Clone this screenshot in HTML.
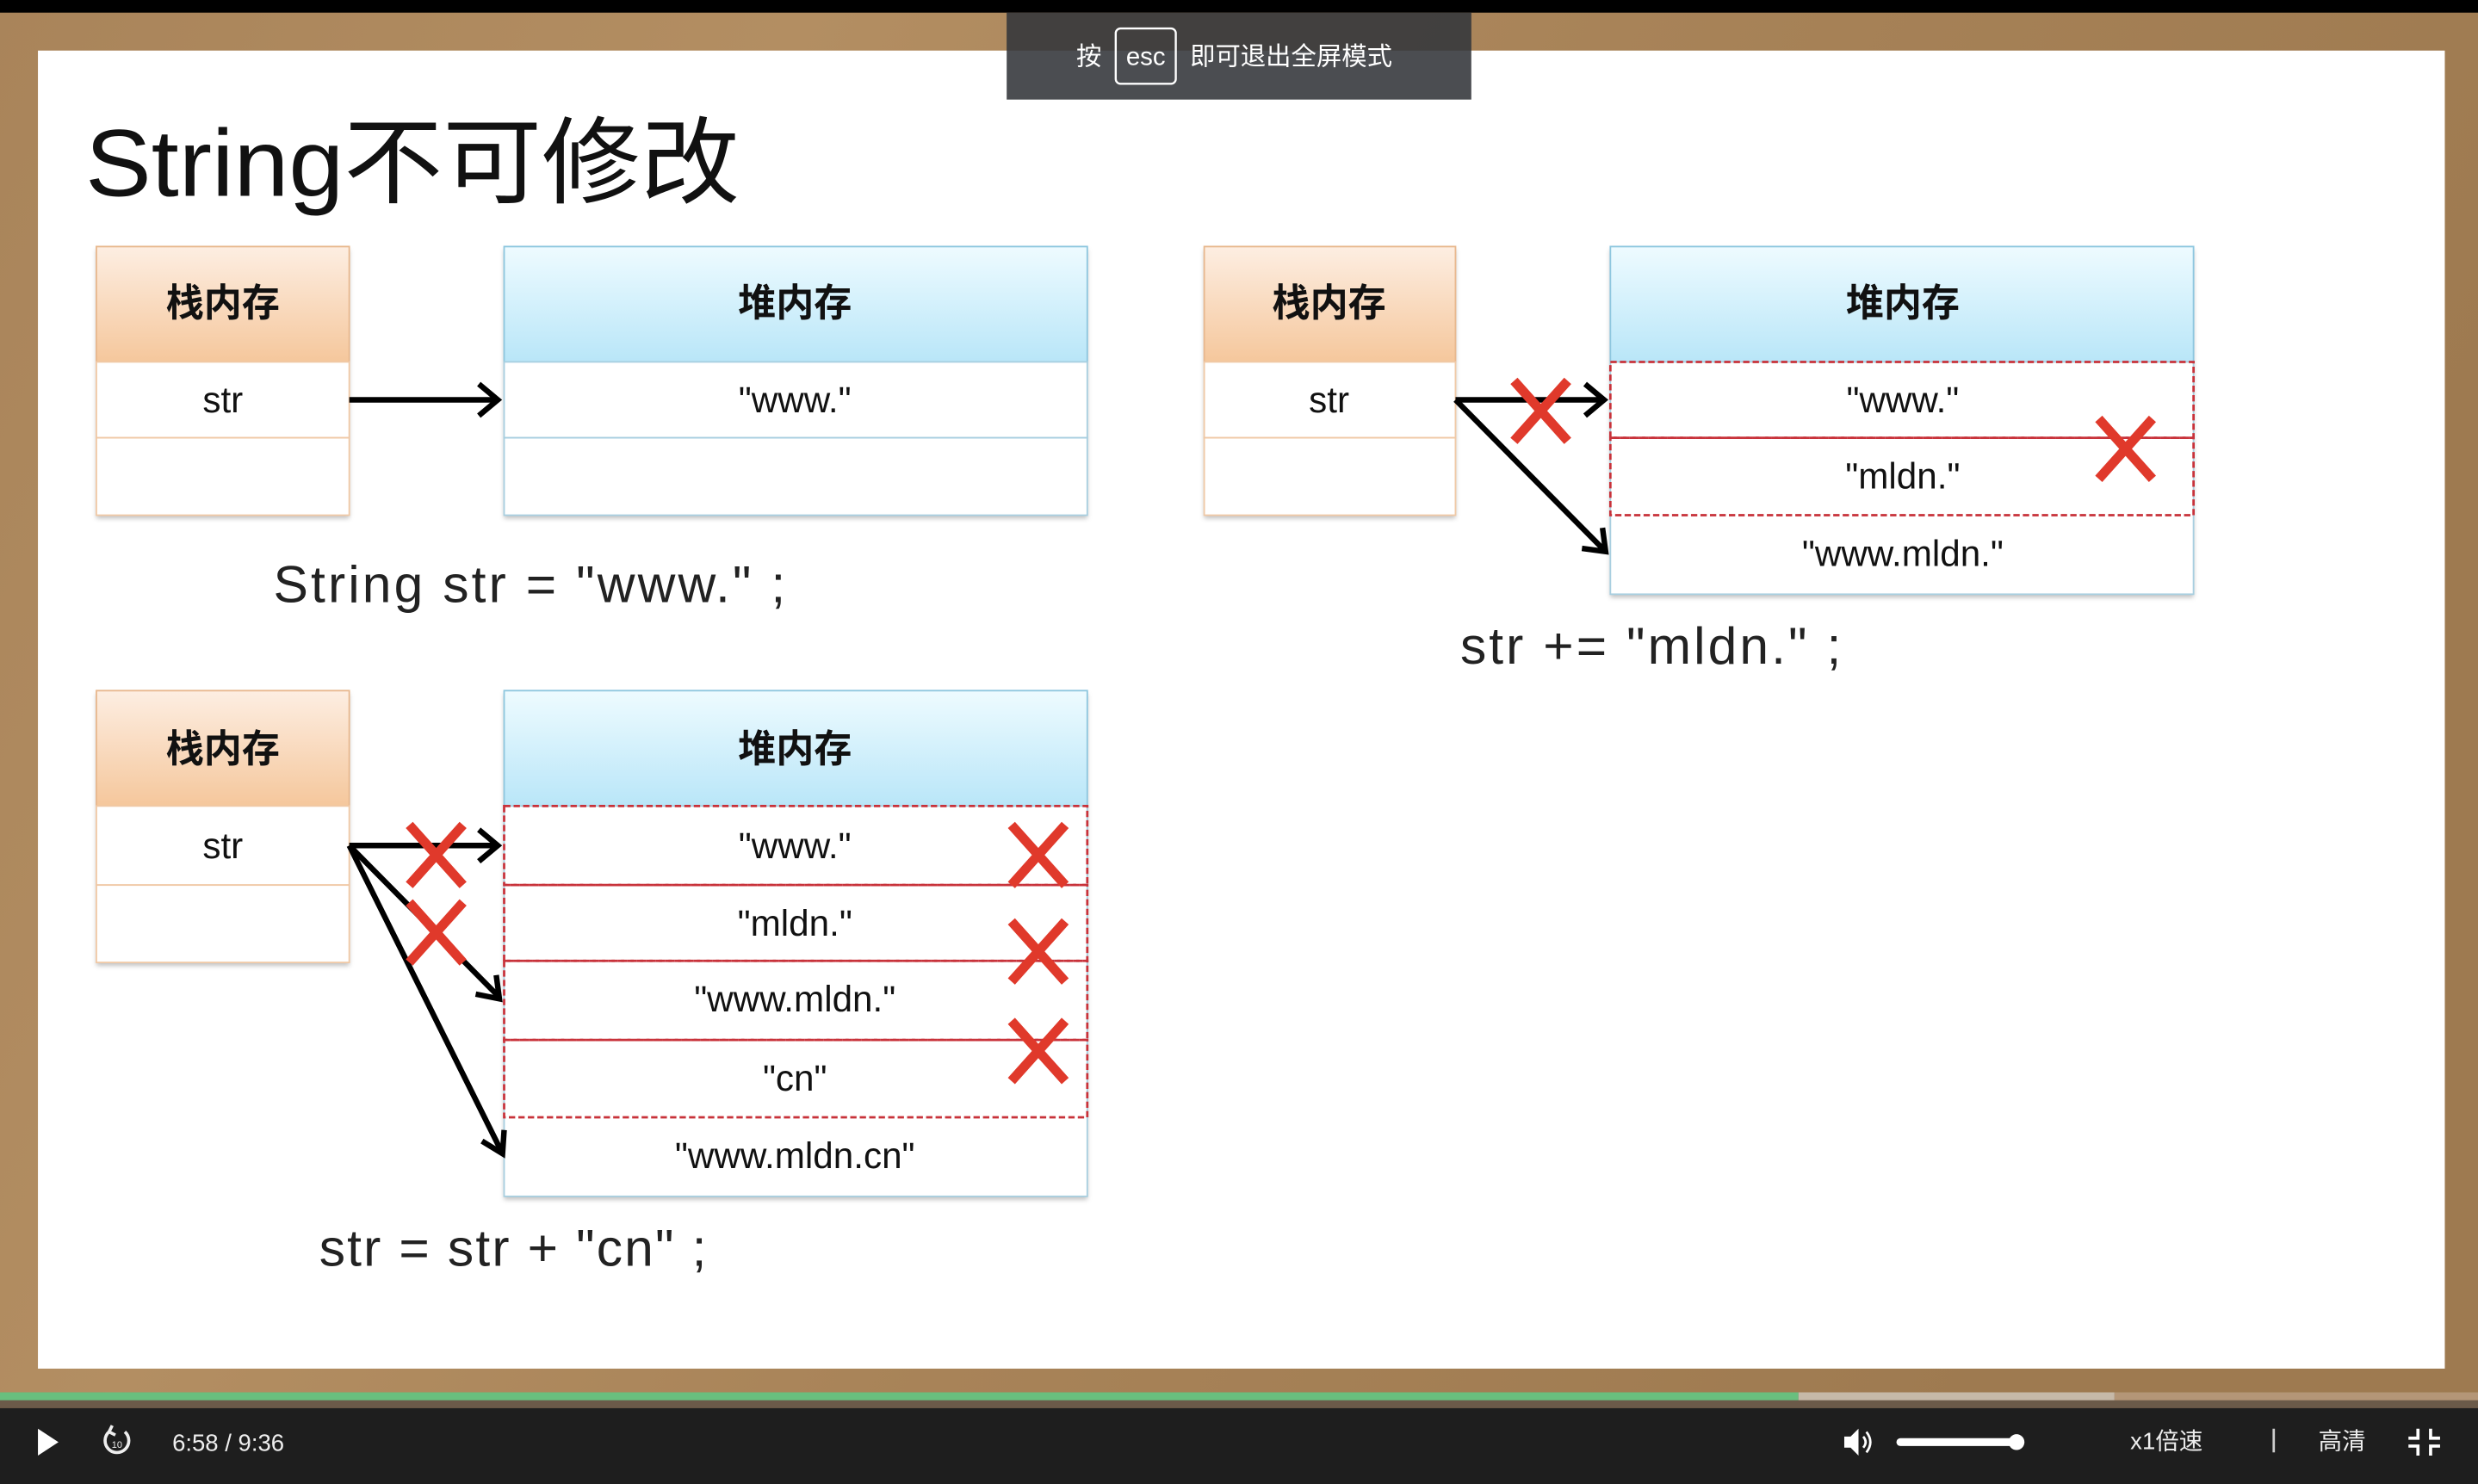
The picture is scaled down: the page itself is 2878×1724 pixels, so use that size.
<!DOCTYPE html>
<html><head><meta charset="utf-8"><style>
html,body{margin:0;padding:0;background:#1e1e1e;}
svg{display:block;}
text{font-family:"Liberation Sans","Noto Sans CJK SC",sans-serif;}
</style></head><body>
<svg width="2878" height="1724" viewBox="0 0 1568 939" preserveAspectRatio="none" xmlns="http://www.w3.org/2000/svg">
<defs>
<linearGradient id="wood" x1="0" y1="0" x2="1" y2="0.3">
<stop offset="0" stop-color="#a9845a"/><stop offset="0.3" stop-color="#b38e62"/><stop offset="0.6" stop-color="#a88358"/><stop offset="1" stop-color="#9e7a50"/></linearGradient>
<linearGradient id="org" x1="0" y1="0" x2="0" y2="1"><stop offset="0" stop-color="#fdeee2"/><stop offset="1" stop-color="#f5c79c"/></linearGradient>
<linearGradient id="blu" x1="0" y1="0" x2="0" y2="1"><stop offset="0" stop-color="#eefbff"/><stop offset="1" stop-color="#b9e6f8"/></linearGradient>
<filter id="sh" x="-5%" y="-5%" width="110%" height="115%"><feDropShadow dx="0" dy="2" stdDeviation="1.5" flood-color="#000" flood-opacity="0.25"/></filter>
<g id="x"><line x1="-17" y1="-19" x2="17" y2="19" stroke="#e0392b" stroke-width="6"/><line x1="17" y1="-19" x2="-17" y2="19" stroke="#e0392b" stroke-width="6"/></g>
</defs>
<rect width="1568" height="939" fill="url(#wood)"/>
<rect width="1568" height="8" fill="#000"/>
<rect x="24" y="32" width="1523" height="834" fill="#fff"/>

<text x="54" y="124" font-size="60" fill="#111" textLength="414" lengthAdjust="spacingAndGlyphs">String不可修改</text>

<g font-size="23" fill="#111" text-anchor="middle">
<g filter="url(#sh)">
<rect x="61" y="156" width="160" height="170" fill="#fff"/>
<rect x="319" y="156" width="369" height="170" fill="#fff"/>
<rect x="762" y="156" width="159" height="170" fill="#fff"/>
<rect x="1019" y="156" width="369" height="220" fill="#fff"/>
<rect x="61" y="437" width="160" height="172" fill="#fff"/>
<rect x="319" y="437" width="369" height="320" fill="#fff"/>
</g>
<!-- set1 -->
<rect x="61" y="156" width="160" height="73" fill="url(#org)" stroke="#e8b88e"/>
<rect x="61" y="229" width="160" height="48" fill="#fff" stroke="#f0c9a6"/>
<rect x="61" y="277" width="160" height="49" fill="#fff" stroke="#f0c9a6"/>
<text x="141" y="200" font-weight="bold" font-size="24">栈内存</text>
<text x="141" y="261">str</text>
<rect x="319" y="156" width="369" height="73" fill="url(#blu)" stroke="#8ec7df"/>
<rect x="319" y="229" width="369" height="48" fill="#fff" stroke="#a8cfe0"/>
<rect x="319" y="277" width="369" height="49" fill="#fff" stroke="#a8cfe0"/>
<text x="503" y="200" font-weight="bold" font-size="24">堆内存</text>
<text x="503" y="261">"www."</text>

<!-- set2 -->
<rect x="762" y="156" width="159" height="73" fill="url(#org)" stroke="#e8b88e"/>
<rect x="762" y="229" width="159" height="48" fill="#fff" stroke="#f0c9a6"/>
<rect x="762" y="277" width="159" height="49" fill="#fff" stroke="#f0c9a6"/>
<text x="841" y="200" font-weight="bold" font-size="24">栈内存</text>
<text x="841" y="261">str</text>
<rect x="1019" y="156" width="369" height="73" fill="url(#blu)" stroke="#8ec7df"/>
<rect x="1019" y="229" width="369" height="147" fill="#fff" stroke="#a8cfe0"/>
<rect x="1019" y="229" width="369" height="48" fill="none" stroke="#c8323a" stroke-dasharray="4,2" stroke-width="1.5"/>
<rect x="1019" y="277" width="369" height="49" fill="none" stroke="#c8323a" stroke-dasharray="4,2" stroke-width="1.5"/>
<text x="1204" y="200" font-weight="bold" font-size="24">堆内存</text>
<text x="1204" y="261">"www."</text>
<text x="1204" y="309">"mldn."</text>
<text x="1204" y="358">"www.mldn."</text>

<!-- set3 -->
<rect x="61" y="437" width="160" height="73" fill="url(#org)" stroke="#e8b88e"/>
<rect x="61" y="510" width="160" height="50" fill="#fff" stroke="#f0c9a6"/>
<rect x="61" y="560" width="160" height="49" fill="#fff" stroke="#f0c9a6"/>
<text x="141" y="482" font-weight="bold" font-size="24">栈内存</text>
<text x="141" y="543">str</text>
<rect x="319" y="437" width="369" height="73" fill="url(#blu)" stroke="#8ec7df"/>
<rect x="319" y="510" width="369" height="247" fill="#fff" stroke="#a8cfe0"/>
<rect x="319" y="510" width="369" height="50" fill="none" stroke="#c8323a" stroke-dasharray="4,2" stroke-width="1.5"/>
<rect x="319" y="560" width="369" height="48" fill="none" stroke="#c8323a" stroke-dasharray="4,2" stroke-width="1.5"/>
<rect x="319" y="608" width="369" height="50" fill="none" stroke="#c8323a" stroke-dasharray="4,2" stroke-width="1.5"/>
<rect x="319" y="658" width="369" height="49" fill="none" stroke="#c8323a" stroke-dasharray="4,2" stroke-width="1.5"/>
<text x="503" y="482" font-weight="bold" font-size="24">堆内存</text>
<text x="503" y="543">"www."</text>
<text x="503" y="592">"mldn."</text>
<text x="503" y="640">"www.mldn."</text>
<text x="503" y="690">"cn"</text>
<text x="503" y="739">"www.mldn.cn"</text>
</g>

<g font-size="33" fill="#222">
<text x="173" y="381" textLength="324" lengthAdjust="spacing">String str = "www." ;</text>
<text x="924" y="420" textLength="241" lengthAdjust="spacing">str += "mldn." ;</text>
<text x="202" y="801" textLength="245" lengthAdjust="spacing">str = str + "cn" ;</text>
</g>

<g stroke="#000" stroke-width="3.5" fill="none">
<line x1="221" y1="253" x2="315" y2="253"/><polyline points="303,243 315,253 303,263"/>
<line x1="921" y1="253" x2="1015" y2="253"/><polyline points="1003,243 1015,253 1003,263"/>
<line x1="921" y1="253" x2="1015" y2="348"/><polyline points="1001,347 1016,349 1014,334"/>
<line x1="221" y1="535" x2="315" y2="535"/><polyline points="303,525 315,535 303,545"/>
<line x1="221" y1="535" x2="315" y2="630"/><polyline points="301,629 316,632 314,617"/>
<line x1="221" y1="535" x2="317" y2="728"/><polyline points="305,722 318,730 319,715"/>
</g>

<use href="#x" x="975" y="260"/>
<use href="#x" x="1345" y="284"/>
<use href="#x" x="276" y="541"/>
<use href="#x" x="276" y="590"/>
<use href="#x" x="657" y="541"/>
<use href="#x" x="657" y="602"/>
<use href="#x" x="657" y="665"/>

<rect x="637" y="8" width="294" height="55" fill="#45474b" opacity="0.97"/>
<rect x="637" y="8" width="294" height="24" fill="#3d3a37" opacity="0.6"/>
<g fill="#fff" font-size="16">
<text x="681" y="41">按</text>
<rect x="706" y="18" width="38" height="35" rx="3" fill="none" stroke="#fff" stroke-width="1.3"/>
<text x="725" y="41" text-anchor="middle">esc</text>
<text x="753" y="41">即可退出全屏模式</text>
</g>

<rect x="0" y="881" width="1568" height="10" fill="#6b5a49"/>
<rect x="0" y="881" width="1138" height="5" fill="#69bf7e"/>
<rect x="1138" y="881" width="200" height="5" fill="#c6b9a8"/>
<rect x="1338" y="881" width="230" height="5" fill="#b49677"/>
<rect x="0" y="891" width="1568" height="48" fill="#1e1e1e"/>
<polygon points="24,904 24,921 37,912.5" fill="#fff"/>
<g stroke="#eee" stroke-width="2" fill="none">
<path d="M69,906 A7.5,7.5 0 1 0 79,906"/>
<polyline points="71,902 69,906 73,908"/>
</g>
<text x="74" y="916" font-size="6" fill="#eee" text-anchor="middle">10</text>
<text x="109" y="918" font-size="15" fill="#eee">6:58 / 9:36</text>
<polygon points="1167,909 1171,909 1176,904 1176,921 1171,916 1167,916" fill="#fff"/>
<path d="M1179,909 Q1182,912.5 1179,916 M1181,906 Q1186,912.5 1181,919" stroke="#fff" stroke-width="1.5" fill="none"/>
<rect x="1200" y="910" width="76" height="5" rx="2.5" fill="#fff"/>
<circle cx="1276" cy="912.5" r="5" fill="#fff"/>
<g font-size="15" fill="#eee">
<text x="1348" y="917">x1倍速</text>
<rect x="1438" y="904" width="1.5" height="15" fill="#ccc"/>
<text x="1467" y="917">高清</text>
</g>
<g stroke="#fff" stroke-width="2" fill="none">
<polyline points="1530,904 1530,910 1524,910"/><polyline points="1538,904 1538,910 1544,910"/>
<polyline points="1530,921 1530,915 1524,915"/><polyline points="1538,921 1538,915 1544,915"/>
</g>
</svg>
</body></html>
